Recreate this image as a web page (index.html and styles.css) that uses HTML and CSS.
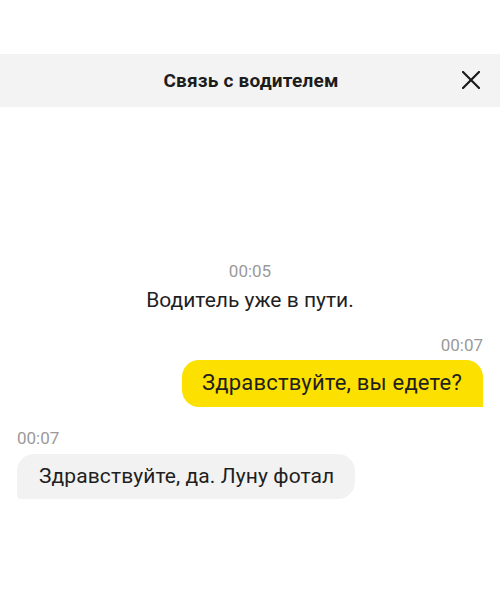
FILE: index.html
```html
<!DOCTYPE html>
<html lang="ru">
<head>
<meta charset="utf-8">
<link rel="stylesheet" href="styles.css">
</head>
<body>
<div class="screen">
  <div class="topgap"></div>
  <header class="header">
    <h1 class="title">Связь с водителем</h1>
    <button class="close" aria-label="Закрыть">
      <svg width="18" height="18" viewBox="0 0 18 18"><path d="M1 1L17 17M17 1L1 17" stroke="#1a1a1a" stroke-width="2.2" stroke-linecap="square" fill="none"/></svg>
    </button>
  </header>
  <main class="chat">
    <div class="system">
      <div class="time">00:05</div>
      <div class="system-text">Водитель уже в пути.</div>
    </div>
    <div class="msg out">
      <div class="time">00:07</div>
      <div class="bubble yellow">Здравствуйте, вы едете?</div>
    </div>
    <div class="msg in">
      <div class="time">00:07</div>
      <div class="bubble gray">Здравствуйте, да. Луну фотал</div>
    </div>
  </main>
</div>
</body>
</html>
```
FILE: styles.css
```css
* { box-sizing: border-box; }
html, body { margin: 0; padding: 0; background: #fff; }
body {
  font-family: Roboto, "Noto Sans", sans-serif;
  color: #1f1f1f;
  width: 500px;
  height: 599px;
  overflow: hidden;
}
.topgap { height: 54px; }
.header {
  height: 53px;
  background: #f3f3f3;
  display: flex;
  align-items: center;
  justify-content: center;
  position: relative;
}
.title {
  margin: 0 0 0 2px;
  font-size: 19px;
  font-weight: 700;
  letter-spacing: 0.2px;
  color: #1c1c1c;
}
.close {
  position: absolute;
  right: 20px;
  top: 17px;
  width: 18px;
  height: 18px;
  padding: 0;
  border: 0;
  background: none;
  display: flex;
}
.chat {
  padding: 154px 17px 0 17px;
  display: flex;
  flex-direction: column;
}
.time {
  font-size: 17px;
  color: #9a9a9a;
  line-height: 20px;
}
.system {
  display: flex;
  flex-direction: column;
  align-items: center;
}
.system-text {
  margin-top: 7px;
  font-size: 21px;
  line-height: 24px;
  color: #1f1f1f;
}
.msg {
  display: flex;
  flex-direction: column;
}
.msg.out { align-items: flex-end; margin-top: 23px; }
.msg.in { align-items: flex-start; margin-top: 21px; }
.bubble {
  font-size: 21px;
  line-height: 24px;
  border-radius: 17px;
}
.bubble.yellow {
  margin-top: 5px;
  background: #fce000;
  padding: 11px 21px 12px 20px;
  border-bottom-right-radius: 0;
  font-size: 22px;
  letter-spacing: 0.2px;
}
.bubble.gray {
  margin-top: 6px;
  background: #f2f2f2;
  padding: 10px 21px 11px 22px;
  border-bottom-left-radius: 4px;
  letter-spacing: 0.1px;
}
```
